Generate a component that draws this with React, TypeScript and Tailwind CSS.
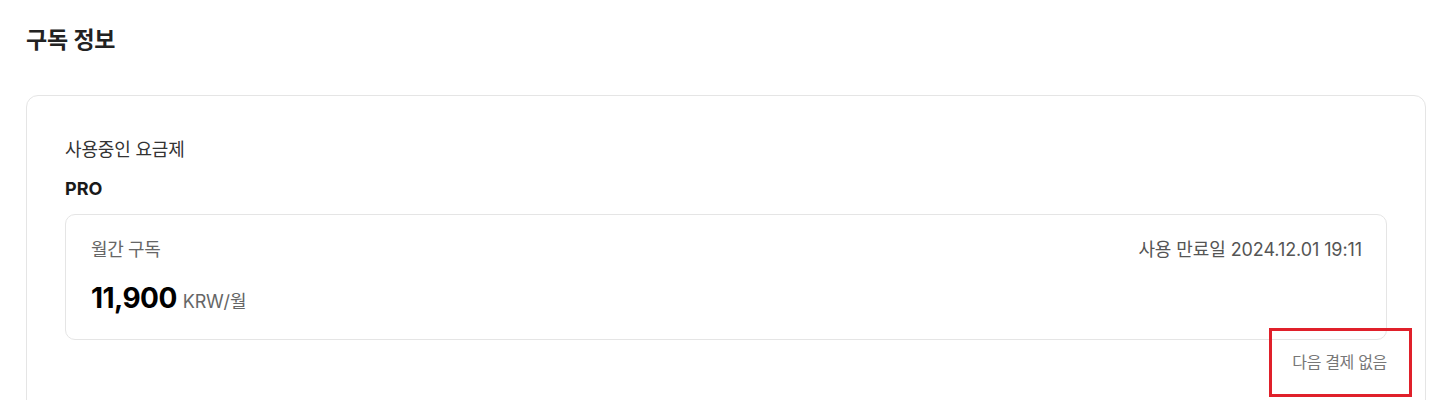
import React from "react";

export default function App() {
  return (
    <div
      className="relative min-h-[400px] bg-white px-[26px] pt-[25px]"
      style={{ fontFamily: 'Inter, "Noto Sans CJK KR", sans-serif' }}
    >
      <h1 className="text-[23px] leading-[31px] font-semibold text-[#222222] tracking-[-0.01em]">
        구독 정보
      </h1>
      <div className="mt-[39px] rounded-[12px] border border-[#e5e5e5] px-[38px] pt-[41px] pb-[40px]">
        <div className="text-[18px] leading-[26px] text-[#333333] tracking-[-0.01em]">사용중인 요금제</div>
        <div className="mt-[13px] text-[18px] leading-[26px] font-bold text-[#1a1a1a]">PRO</div>
        <div className="mt-[12px] rounded-[10px] border border-[#e5e5e5] pl-[25px] pr-[24px] pt-[22px] pb-[23px]">
          <div className="flex items-start justify-between">
            <div className="text-[18px] leading-[26px] text-[#666666] tracking-[-0.02em]">월간 구독</div>
            <div className="text-[18px] leading-[26px] text-[#555555] tracking-[-0.005em]">
              사용 만료일 2024.12.01 19:11
            </div>
          </div>
          <div className="mt-[17px] flex items-baseline gap-[6px]">
            <span className="text-[28px] leading-[36px] font-bold text-black tracking-[-0.02em]">11,900</span>
            <span className="text-[18px] leading-[26px] text-[#666666] tracking-[-0.01em]">KRW/월</span>
          </div>
        </div>
        <div className="mt-[10px] flex justify-end">
          <span className="text-[16px] leading-[24px] text-[#777777] tracking-[-0.02em]">다음 결제 없음</span>
        </div>
      </div>
      <div className="pointer-events-none absolute left-[1269px] top-[328px] h-[69px] w-[143px] border-[3px] border-[#e0202a]" />
    </div>
  );
}
